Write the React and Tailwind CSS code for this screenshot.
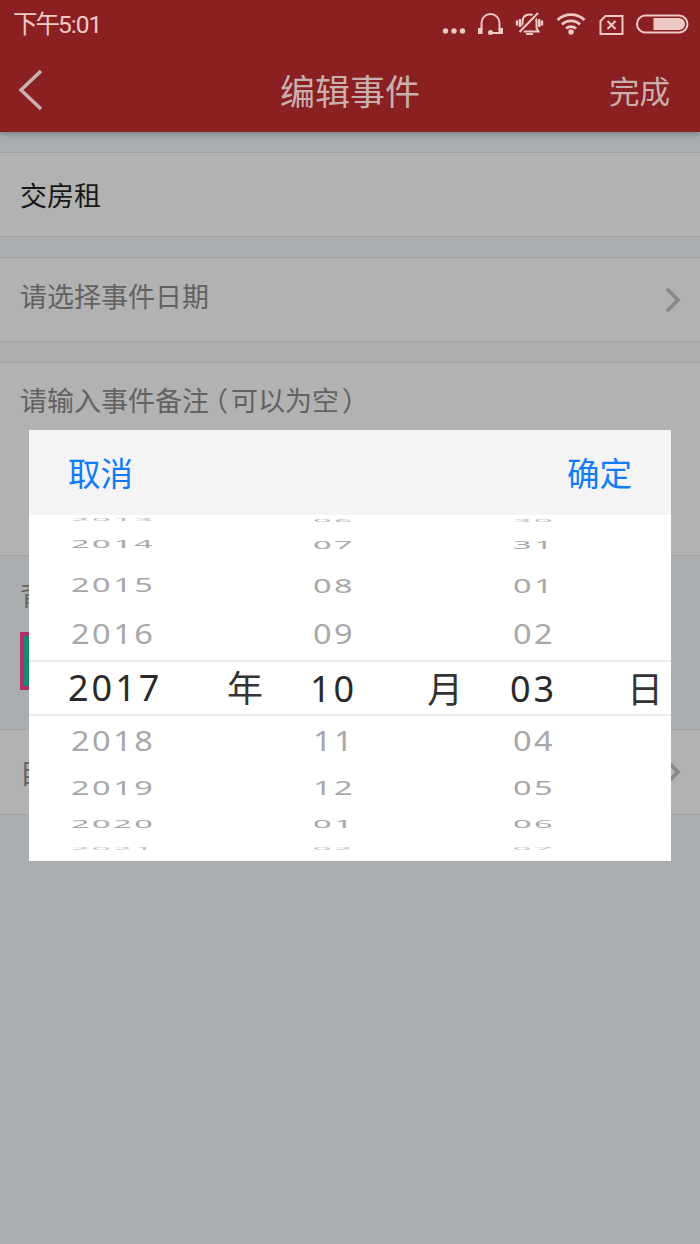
import React from "react";

const FONT = "font-['Noto_Sans','Noto_Sans_CJK_SC',sans-serif]";

// Slots of the wheel from top to bottom, the selected one is in the middle
const SLOTS = [
  { row: "h-[13px] pb-1", text: "scale-y-[0.11] opacity-80" },
  { row: "h-8", text: "scale-y-[0.33]" },
  { row: "h-12", text: "scale-y-[0.62]" },
  { row: "h-[52px]", text: "scale-y-[0.83]" },
  { row: "h-14", text: "" },
  { row: "h-[50px]", text: "scale-y-[0.83]" },
  { row: "h-[42px]", text: "scale-y-[0.62]" },
  { row: "h-[33px]", text: "scale-y-[0.33]" },
  { row: "h-5 pb-1", text: "scale-y-[0.09] opacity-70" },
];

const YEARS = ["2013", "2014", "2015", "2016", "2017", "2018", "2019", "2020", "2021"];
const MONTHS = ["06", "07", "08", "09", "10", "11", "12", "01", "02"];
const DAYS = ["30", "31", "01", "02", "03", "04", "05", "06", "07"];

function StatusIcons() {
  return (
    <svg width="250" height="30" viewBox="440 8 250 30" fill="none" stroke="#eec9c6" strokeWidth="2">
      <g fill="#eec9c6" stroke="none">
        <circle cx="445.5" cy="30" r="2.7" />
        <circle cx="454" cy="30" r="2.7" />
        <circle cx="462.5" cy="30" r="2.7" />
      </g>

      {/* headset */}
      <path d="M481.5 29V22a9 9 0 0 1 18 0v7M501 32h-11" />
      <path d="M478 27h4.500v6H478zM498.500 27h4.500v6h-4.500z" fill="#eec9c6" stroke="none" />
      <circle cx="490.500" cy="31.500" r="2.500" fill="#eec9c6" stroke="none" />

      {/* muted bell */}
      <path d="M522.500 27v-6c0-4.500 2.500-7.500 7-7.500s7 3 7 7.500v6l2 3.500h-15" />
      <path d="M519.500 31 538 12" stroke="#8b2023" strokeWidth="5" />
      <path d="M519.500 31 538 12M526 33h7" />
      <path d="M520 18v8M517 19.500v5M539.200 18v8M542 19.500v5" strokeWidth="2.400" />

      {/* wifi */}
      <path d="M557.500 19a19.500 19.500 0 0 1 27 0M562 23.500a13 13 0 0 1 18 0M566 27.500a7.500 7.500 0 0 1 10 0" strokeWidth="2.800" />
      <circle cx="571" cy="31" r="2.700" fill="#eec9c6" stroke="none" />

      {/* no sim */}
      <path d="M605.500 15H622.500V33H600.500V20z" />
      <path d="m607.500 20 8 8m0-8-8 8" />

      {/* battery */}
      <rect x="637" y="14.500" width="50.500" height="17" rx="8.500" />
      <path d="M653.500 17h25.500a6 6 0 0 1 0 12h-25.500z" fill="#eec9c6" stroke="none" />
    </svg>
  );
}

function Chevron() {
  return (
    <svg width="18" height="26" viewBox="0 0 18 26" fill="none" stroke="#8a8a8a" strokeWidth="3.800">
      <path d="m3 2 11 11L3 24" />
    </svg>
  );
}

function Wheel({ items, unit, className }) {
  return (
    <div className={`flex flex-col ${className}`}>
      {items.map((item, i) => {
        const selected = i === 4;
        return (
          <div key={i} className={`flex items-center ${SLOTS[i].row}`}>
            <span
              className={`shrink-0 leading-none ${
                selected
                  ? "text-[36px] tracking-[3px] text-[#2a2a2a]"
                  : "pl-[3px] text-[32.5px] tracking-[2.5px] text-[#a8a8a8]"
              } ${SLOTS[i].text}`}
            >
              {item}
            </span>
            {selected && (
              <span className="ml-auto pt-0.5 text-[36px] leading-none text-[#333]">{unit}</span>
            )}
          </div>
        );
      })}
    </div>
  );
}

function DatePicker() {
  return (
    <div className="absolute top-[430px] left-[29px] w-[642px] bg-white">
      <div className="flex h-[85px] items-center justify-between bg-[#f4f4f4] px-[39px] pt-1 text-[32.500px] text-[#117cf6]">
        <button>取消</button>
        <button>确定</button>
      </div>
      <div className="relative flex h-[346px] overflow-hidden">
        <div className="absolute top-[145px] h-14 w-full border-y-2 border-[#ebebeb]" />
        <Wheel items={YEARS} unit="年" className="ml-[39px] w-[195px]" />
        <Wheel items={MONTHS} unit="月" className="ml-[47px] w-[153px] pt-px" />
        <Wheel items={DAYS} unit="日" className="ml-[47px] w-[153px] pt-px" />
      </div>
    </div>
  );
}

export default function App() {
  return (
    <div className={`relative h-[1244px] w-[700px] overflow-hidden bg-[#a9adb0] ${FONT}`}>
      <header className="relative h-[132px] bg-[#8b2023] shadow-[0_1px_6px_rgba(40,50,70,0.5)]">
        <div className="flex h-12 items-center justify-between pr-[10px] pl-[13px] text-[#eec9c6]">
          <span className="pt-[3px] font-['Roboto','Noto_Sans_CJK_SC',sans-serif] text-[24.500px] tracking-[-1px]">
            <span className="tracking-[-2px]">下午</span>5:01
          </span>
          <StatusIcons />
        </div>
        <div className="grid h-[84px] grid-cols-3 items-center px-[18px] text-[#c9b0ad]">
          <svg width="26" height="44" viewBox="0 0 26 44" fill="none" stroke="currentColor" strokeWidth="3.500">
            <path d="M23 3 3 22l20 19" />
          </svg>
          <h1 className="pt-0.5 text-center text-[35px] leading-none">编辑事件</h1>
          <span className="pt-0.5 pr-3 text-right text-[30.500px] leading-none">完成</span>
        </div>
      </header>

      <main className="text-[27px] text-[#626262]">
        <div className="mt-5 flex h-[85px] items-center border-y border-[#a2a2a2] bg-[#b2b2b2] px-5 pt-1 text-[#181818]">
          交房租
        </div>

        <div className="mt-5 flex h-[85px] items-center justify-between border-y border-[#a2a2a2] bg-[#b2b2b2] pr-[18px] pl-5">
          <span className="pb-1">请选择事件日期</span>
          <Chevron />
        </div>

        <div className="h-5 bg-[#aeaeae]" />
        <div className="flex h-[194px] border-y border-[#a2a2a2] bg-[#b2b2b2] px-5 pt-[18px]">
          <span>请输入事件备注</span>
          <span className="-ml-2">（</span>
          <span className="ml-[3px]">可以为空</span>
          <span className="ml-[3px]">）</span>
        </div>

        <div className="h-[173px] px-5 pt-5">
          <p className="leading-10">背景颜色</p>
          <div className="mt-4 size-[58px] border-4 border-[#b0306a] bg-[#168a70]" />
        </div>

        <div className="flex h-[86px] items-center justify-between border-y border-[#a2a2a2] bg-[#b2b2b2] pr-[18px] pl-5">
          <span className="pt-1">目标提醒</span>
          <Chevron />
        </div>
      </main>

      <DatePicker />
    </div>
  );
}
